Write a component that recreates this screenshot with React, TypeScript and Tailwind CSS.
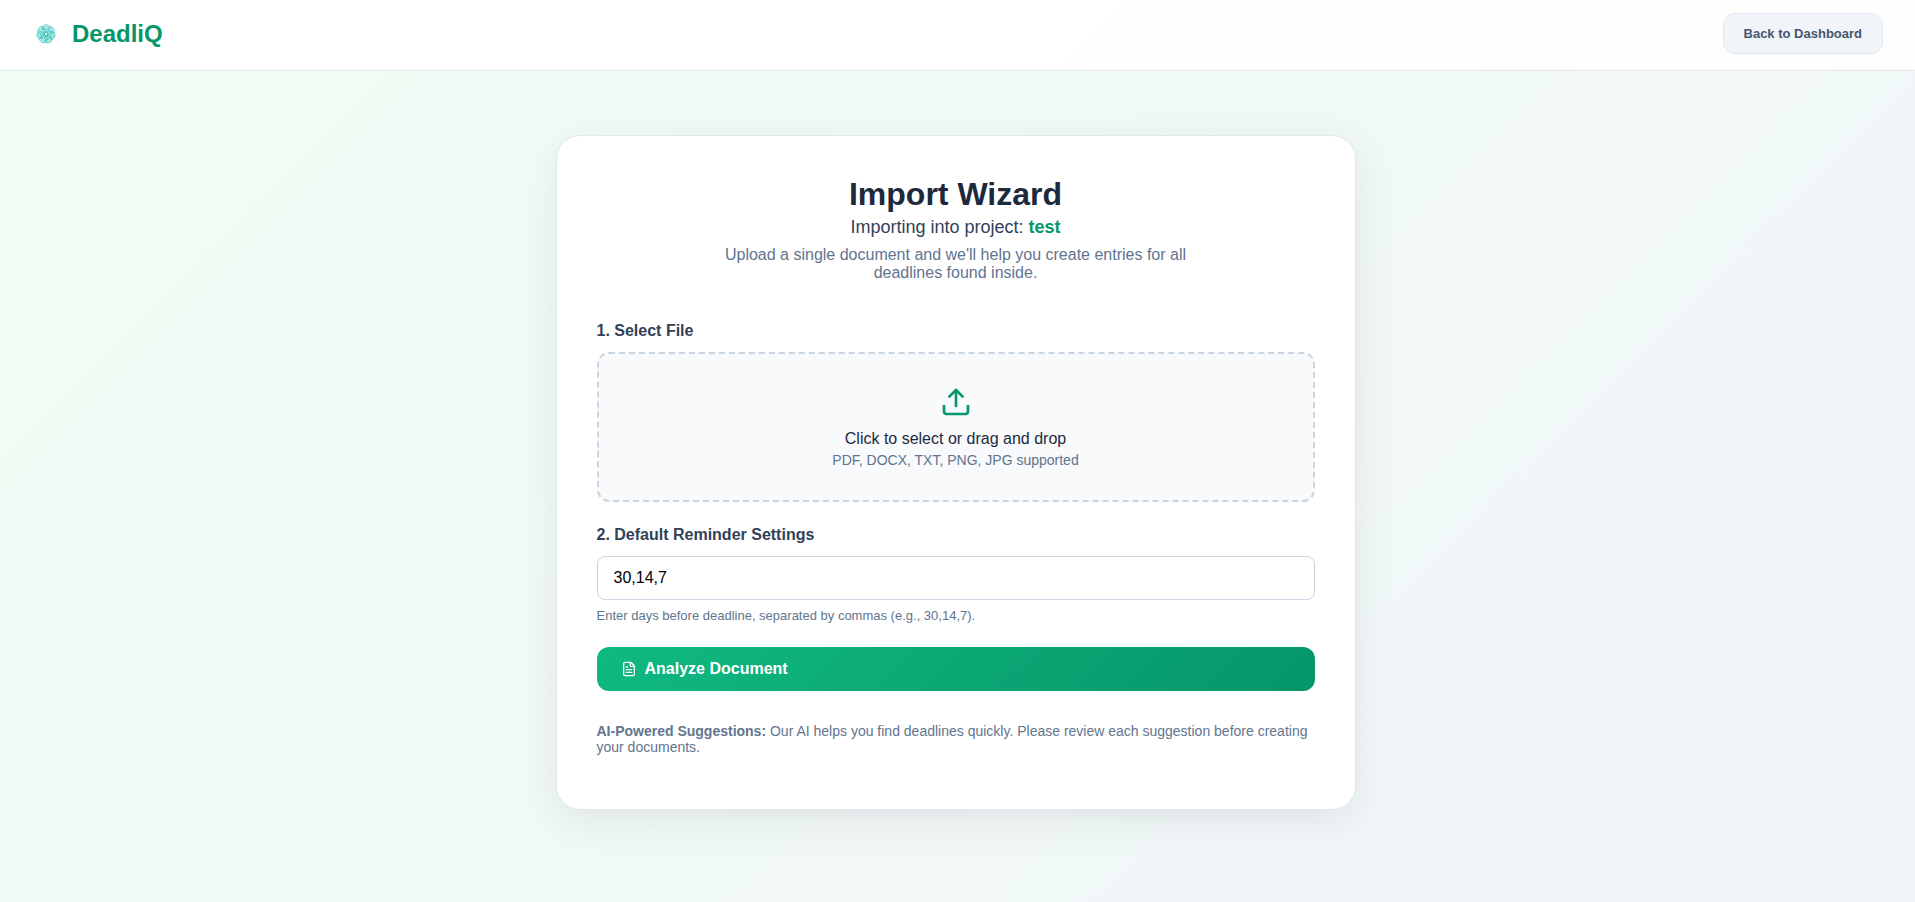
import React, { useState } from 'react'
import { FileText, Upload } from 'lucide-react'

const PETALS = [0, 51.4, 102.9, 154.3, 205.7, 257.1, 308.6]

const Logo = () => (
  <svg viewBox="0 0 28 28" className="h-7 w-7" fill="none" stroke="#1fbcb5" strokeWidth="0.7" aria-hidden="true">
    {PETALS.map((angle) => (
      <g key={angle} transform={`rotate(${angle} 14 14)`}>
        <path d="M12.2 14C10 10.6 10.2 6.4 12.4 5.1C14.4 4.1 17 5.2 18.8 7.6" />
        <path d="M13 13.4C11.4 10.2 11.8 7.4 13.2 6.5C14.6 5.8 16.6 7 17.8 9" />
        <path d="M13.8 13C12.8 10.4 13 8.6 13.9 8C14.9 7.6 16.2 8.8 16.8 10.4" />
      </g>
    ))}
  </svg>
)

const Header = () => (
  <header className="flex items-center justify-between border-b border-slate-200 bg-white/90 px-8 pt-[13px] pb-4">
    <a href="/" className="flex items-center gap-3 text-2xl font-bold leading-7 text-[#059669]">
      <Logo />
      <span>DeadliQ</span>
    </a>
    <button
      type="button"
      className="rounded-xl border border-slate-200 bg-slate-100 px-5 py-3 text-[13px] leading-[15px] font-semibold text-slate-600"
    >
      Back to Dashboard
    </button>
  </header>
)

export default function App() {
  const [reminders, setReminders] = useState('30,14,7')

  return (
    <div className="flex min-h-screen flex-col bg-[linear-gradient(135deg,#f0fdf4_0%,#f1f5f9_100%)] font-['Liberation_Sans',Arial,sans-serif] text-slate-800">
      <Header />
      <main className="py-16 pr-9 pl-8">
        <form
          className="mx-auto max-w-[800px] rounded-3xl border border-slate-200 bg-white px-10 pt-10 pb-[54px] shadow-[0_10px_40px_rgba(0,0,0,0.08)]"
          onSubmit={(e) => e.preventDefault()}
        >
          <div className="mb-10 text-center">
            <h1 className="text-[32px] leading-[37px] font-bold text-slate-800">Import Wizard</h1>
            <p className="mt-1 text-lg leading-[21px] text-slate-700">
              Importing into project: <strong className="text-[#059669]">test</strong>
            </p>
            <p className="mx-auto mt-2 max-w-[500px] text-base leading-[18px] text-slate-500">
              Upload a single document and we'll help you create entries for all deadlines found inside.
            </p>
          </div>

          <h2 className="mb-3 text-base leading-[18px] font-semibold text-slate-700">1. Select File</h2>
          <label
            htmlFor="file"
            className="flex cursor-pointer flex-col items-center rounded-xl border-2 border-dashed border-slate-300 bg-slate-50 p-8"
          >
            <Upload className="h-8 w-8 text-[#059669]" />
            <span className="mt-3 text-base leading-[18px] text-slate-800">Click to select or drag and drop</span>
            <span className="mt-1 text-sm leading-4 text-slate-500">PDF, DOCX, TXT, PNG, JPG supported</span>
            <input id="file" type="file" accept=".pdf,.docx,.txt,.png,.jpg" className="hidden" />
          </label>

          <label htmlFor="reminders" className="mt-6 mb-3 block text-base leading-[18px] font-semibold text-slate-700">
            2. Default Reminder Settings
          </label>
          <input
            id="reminders"
            type="text"
            value={reminders}
            onChange={(e) => setReminders(e.target.value)}
            className="block w-full rounded-lg border border-slate-300 bg-white px-4 py-3 text-base leading-[18px] text-black"
          />
          <p className="mt-2 text-[13px] leading-[15px] text-slate-500">
            Enter days before deadline, separated by commas (e.g., 30,14,7).
          </p>

          <button
            type="submit"
            className="mt-6 flex h-11 w-full items-center gap-2 rounded-xl bg-[linear-gradient(135deg,#10b981_0%,#059669_100%)] px-6 text-base font-semibold text-white"
          >
            <FileText className="h-4 w-4" />
            Analyze Document
          </button>

          <p className="mt-8 text-sm leading-4 text-slate-500">
            <strong>AI-Powered Suggestions:</strong> Our AI helps you find deadlines quickly. Please review each
            suggestion before creating your documents.
          </p>
        </form>
      </main>
    </div>
  )
}
